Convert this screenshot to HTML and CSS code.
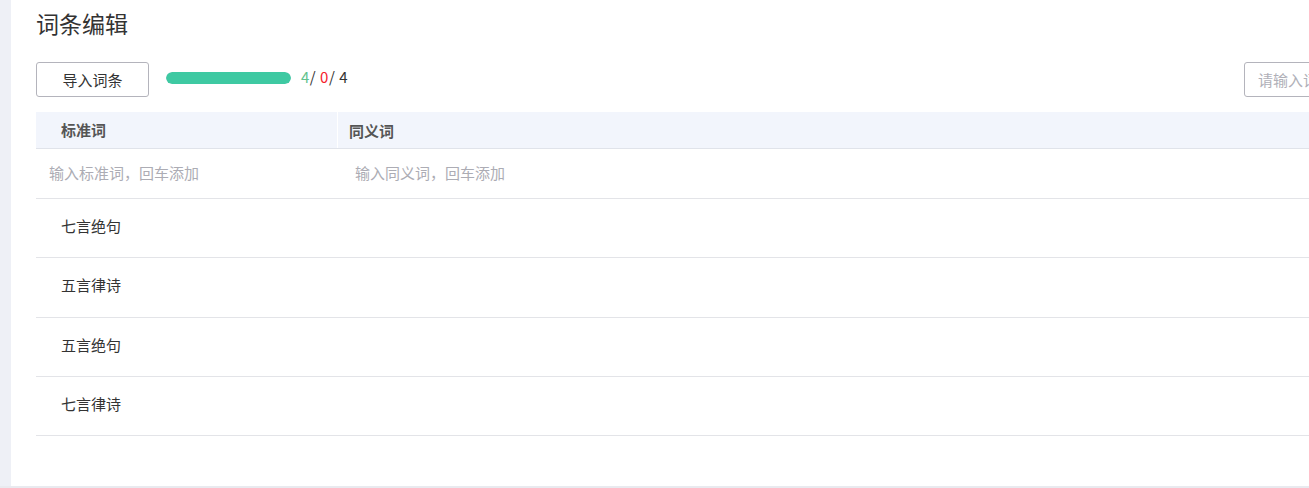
FILE: index.html
```html
<!DOCTYPE html>
<html lang="zh">
<head>
<meta charset="utf-8">
<title>词条编辑</title>
<link rel="stylesheet" href="styles.css">
</head>
<body>
<div class="panel">
  <h1 class="title">词条编辑</h1>
  <div class="toolbar">
    <div class="left">
      <button class="btn">导入词条</button>
      <div class="progress"><div class="progress-fill" style="width:100%"></div></div>
      <span class="count"><span class="ok">4</span>/ <span class="err">0</span>/ 4</span>
    </div>
    <input class="search" type="text" placeholder="请输入词条搜索">
  </div>
  <div class="table">
    <div class="row head">
      <div class="c1">标准词</div>
      <div class="c2">同义词</div>
    </div>
    <div class="row inputs">
      <div class="c1"><span class="ph">输入标准词，回车添加</span></div>
      <div class="c2"><span class="ph">输入同义词，回车添加</span></div>
    </div>
    <div class="row data"><div class="c1">七言绝句</div><div class="c2"></div></div>
    <div class="row data"><div class="c1">五言律诗</div><div class="c2"></div></div>
    <div class="row data"><div class="c1">五言绝句</div><div class="c2"></div></div>
    <div class="row data"><div class="c1">七言律诗</div><div class="c2"></div></div>
  </div>
</div>
</body>
</html>
```
FILE: styles.css
```css
html, body {
  margin: 0;
  padding: 0;
  overflow: hidden;
  height: 488px;
}
body {
  background: #e9eaef;
  font-family: "Noto Sans CJK SC", "Noto Sans", sans-serif;
  font-size: 15px;
  color: #333;
}
.panel {
  margin-left: 11px;
  width: 1460px;
  height: 486px;
  box-sizing: border-box;
  background: #fff;
  padding: 5px 25px 0 25px;
  box-shadow: -11px 0 0 #eef0f6;
}
.title {
  margin: 0;
  font-size: 23px;
  font-weight: normal;
  line-height: 36px;
  color: #333;
}
.toolbar {
  margin-top: 21px;
  display: flex;
  justify-content: space-between;
  align-items: center;
}
.left {
  display: flex;
  align-items: center;
}
.btn {
  width: 113px;
  height: 35px;
  border: 1px solid #b4b4bc;
  border-radius: 3px;
  background: #fff;
  font-family: inherit;
  font-size: 15px;
  color: #333;
  padding: 0;
}
.progress {
  margin-left: 17px;
  width: 125px;
  height: 12px;
  border-radius: 6px;
  background: #e5e9f2;
  overflow: hidden;
  margin-top: -3px;
}
.progress-fill {
  height: 100%;
  background: #3ec9a2;
  border-radius: 6px;
}
.count {
  margin-left: 10px;
  font-size: 15px;
  letter-spacing: 0.5px;
  color: #333;
  margin-top: -6px;
}
.ok { color: #62c28e; }
.err { color: #f5222d; }
.search {
  width: 202px;
  height: 35px;
  box-sizing: border-box;
  border: 1px solid #b4b4bc;
  border-radius: 3px;
  padding: 0 13px;
  font-family: inherit;
  font-size: 15px;
  outline: none;
}
.search::placeholder { color: #b0b0b8; }
.table {
  margin-top: 15px;
}
.row {
  display: flex;
  border-bottom: 1px solid #e3e4e8;
}
.c1 {
  width: 302px;
  flex: none;
  box-sizing: border-box;
}
.c2 { flex: 1; }
.head {
  background: #f2f5fc;
  height: 36px;
  align-items: center;
  font-weight: bold;
  color: #555;
  border-bottom-color: #e0e3ea;
}
.head .c1 {
  padding-left: 25px;
  border-right: 1px solid #fff;
  line-height: 36px;
}
.head .c2 { padding-left: 11px; }
.inputs {
  height: 49px;
  align-items: center;
}
.inputs .c1, .inputs .c2 { margin-top: -3px; }
.inputs .c1 { padding-left: 13px; }
.inputs .c2 { padding-left: 17px; }
.ph { color: #acacb4; }
.data {
  height: 58.3px;
  align-items: center;
}
.data .c1 { padding-left: 25px; margin-top: -5px; }
```
